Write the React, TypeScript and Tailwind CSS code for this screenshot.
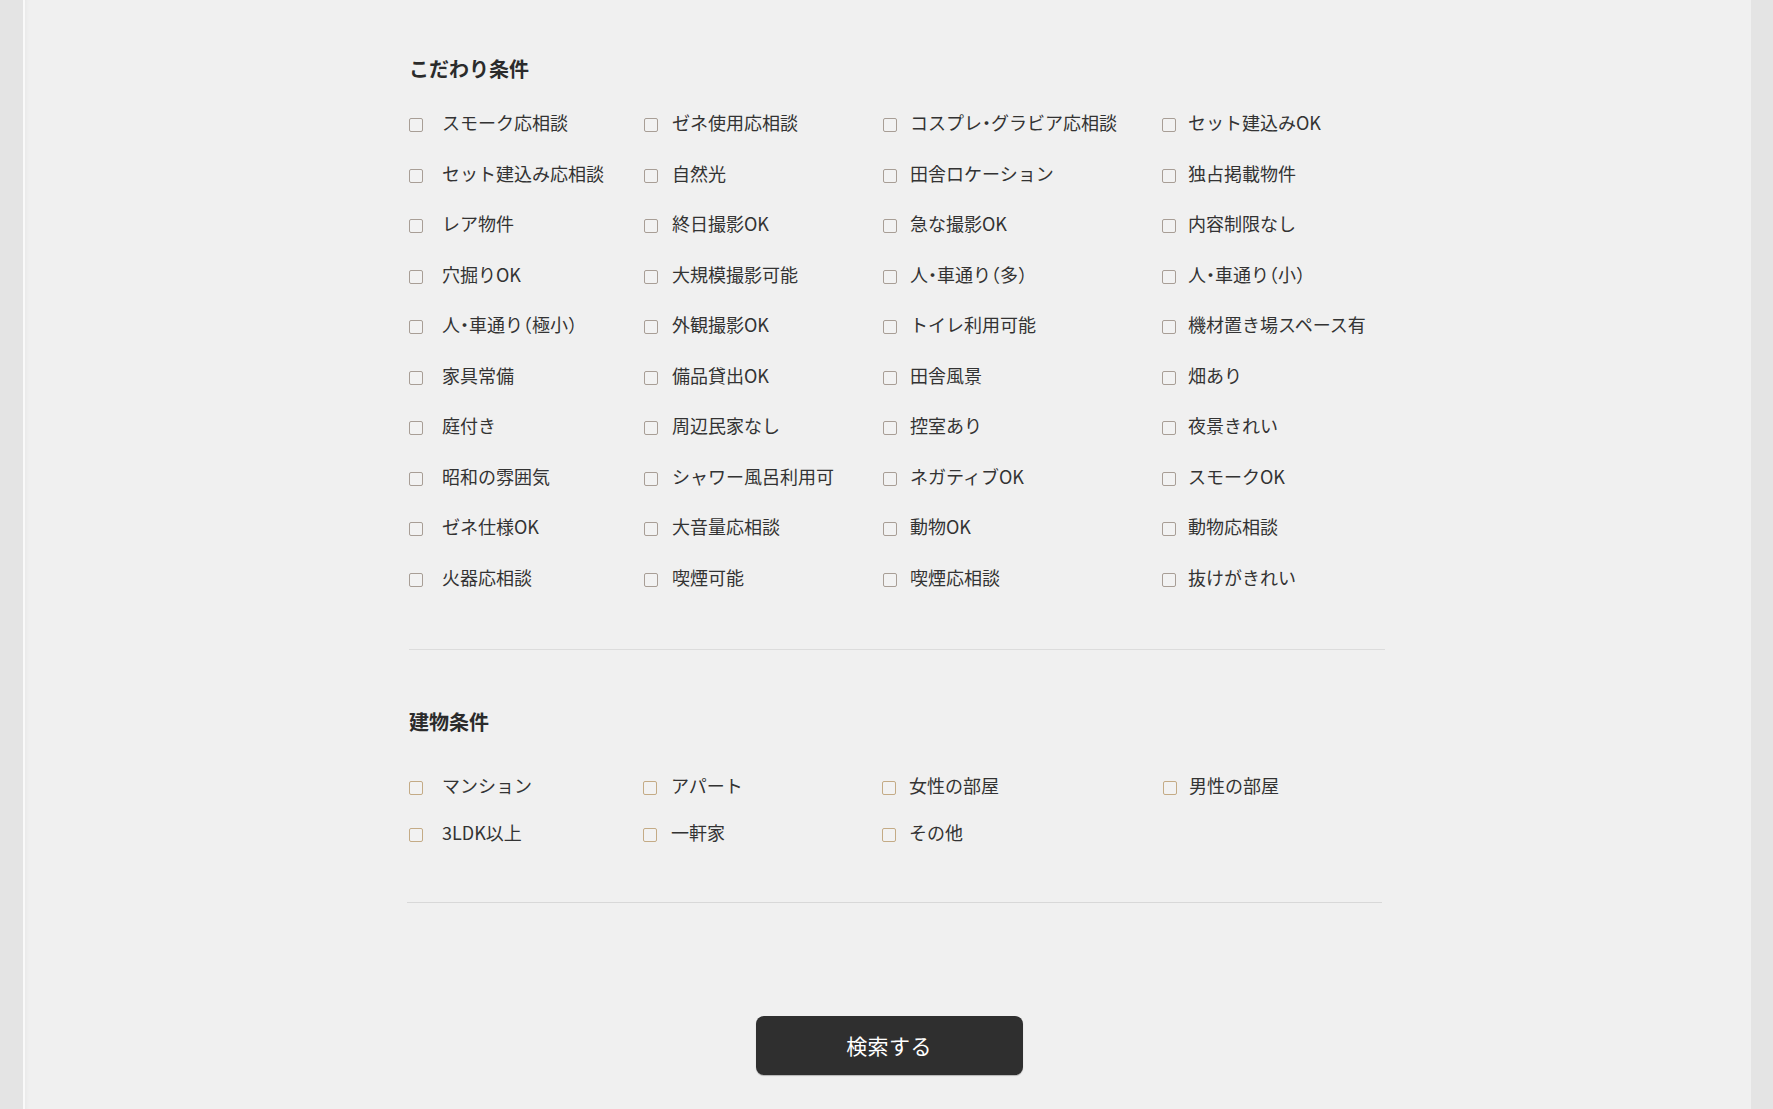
import React from "react";

const section1: string[] = [
  "スモーク応相談", "ゼネ使用応相談", "コスプレ・グラビア応相談", "セット建込みOK",
  "セット建込み応相談", "自然光", "田舎ロケーション", "独占掲載物件",
  "レア物件", "終日撮影OK", "急な撮影OK", "内容制限なし",
  "穴掘りOK", "大規模撮影可能", "人・車通り（多）", "人・車通り（小）",
  "人・車通り（極小）", "外観撮影OK", "トイレ利用可能", "機材置き場スペース有",
  "家具常備", "備品貸出OK", "田舎風景", "畑あり",
  "庭付き", "周辺民家なし", "控室あり", "夜景きれい",
  "昭和の雰囲気", "シャワー風呂利用可", "ネガティブOK", "スモークOK",
  "ゼネ仕様OK", "大音量応相談", "動物OK", "動物応相談",
  "火器応相談", "喫煙可能", "喫煙応相談", "抜けがきれい",
];

const section2: string[] = [
  "マンション", "アパート", "女性の部屋", "男性の部屋",
  "3LDK以上", "一軒家", "その他",
];

const gapClasses = ["gap-[19px]", "gap-[14px]", "gap-[13px]", "gap-[12px]"];

function Item({ label, col, gold }: { label: string; col: number; gold?: boolean }) {
  return (
    <label className={`flex items-center ${gapClasses[col]} cursor-pointer`}>
      <span
        className={`block w-[14px] h-[14px] mt-[4px] shrink-0 rounded-[2px] border ${
          gold ? "border-[#c4ab86]" : "border-[#a89e96]"
        } bg-[#f2f2f2]`}
      />
      <span className="text-[18px] leading-[26px] pb-[2px] text-[#333333] whitespace-nowrap [font-feature-settings:'halt']">
        {label}
      </span>
    </label>
  );
}

export default function App() {
  return (
    <div
      className="min-h-screen bg-[#e4e4e4] flex"
      style={{ fontFamily: '"Noto Sans CJK JP", "Noto Sans", sans-serif' }}
    >
      <div className="ml-[23px] w-[1728px] bg-[#f0f0f0] border-l-2 border-[#f9f9f9] shadow-[inset_4px_0_4px_-3px_rgba(0,0,0,0.04)] flex flex-col pt-[55px] pb-[60px]">
        <div className="ml-[384px] w-[976px] flex flex-col">
          <h2 className="text-[20px] leading-[28px] font-bold text-[#2b2b2b]">こだわり条件</h2>
          <div className="mt-[15px] grid grid-cols-[235px_239px_279px_1fr] auto-rows-[50.5px] items-center">
            {section1.map((l, i) => (
              <Item key={l} label={l} col={i % 4} />
            ))}
          </div>
          <div className="mt-[46px] h-px bg-[#dcdcdc]" />

          <h2 className="mt-[58px] text-[20px] leading-[28px] font-bold text-[#2b2b2b]">建物条件</h2>
          <div className="mt-[26px] grid grid-cols-[234px_239px_281px_1fr] auto-rows-[47.5px] items-center">
            {section2.map((l, i) => (
              <Item key={l} label={l} col={i % 4} gold />
            ))}
          </div>
          <div className="mt-[45px] -ml-[2px] w-[975px] h-px bg-[#d8d8d8]" />
        </div>

        <div className="mt-[113px] flex justify-center">
          <button className="ml-[2px] w-[267px] h-[59px] rounded-[8px] bg-[#2f2f2f] text-white text-[21px] tracking-[0.02em] shadow-[0_1px_1px_rgba(0,0,0,0.25)]">
            検索する
          </button>
        </div>
      </div>
    </div>
  );
}
